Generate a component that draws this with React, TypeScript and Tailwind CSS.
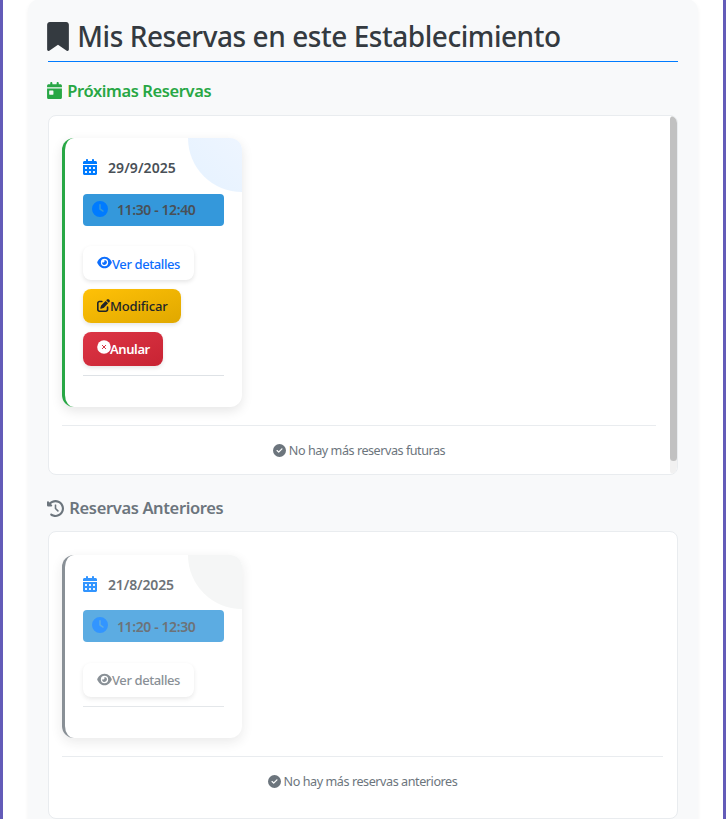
import type { ReactNode } from "react";
import {
  FaBookmark,
  FaCalendarDay,
  FaCalendarDays,
  FaCircleCheck,
  FaClock,
  FaClockRotateLeft,
  FaEye,
  FaPenToSquare,
} from "react-icons/fa6";

function CancelIcon() {
  return (
    <svg viewBox="0 0 14 14" className="size-[14px] shrink-0 -translate-y-[2px]" aria-hidden="true">
      <circle cx="7" cy="7" r="6.8" fill="#fff" />
      <path d="M5.3 5.3l3.4 3.4M8.7 5.3L5.3 8.7" stroke="#d73243" strokeWidth="1" strokeLinecap="round" />
    </svg>
  );
}

function Booking({
  date,
  time,
  past = false,
  children,
}: {
  date: string;
  time: string;
  past?: boolean;
  children: ReactNode;
}) {
  return (
    <article
      className={`relative w-[180px] overflow-hidden rounded-[12px] border-l-[3px] bg-white px-[18px] shadow-[0_4px_12px_rgba(0,0,0,0.1)] ${
        past ? "h-[183px] border-[#6c757d] opacity-80" : "h-[269px] border-[#28a745]"
      }`}
    >
      <div
        className={`absolute right-0 top-0 h-[54px] w-[54px] rounded-bl-full ${
          past ? "bg-[#f3f5f4]" : "bg-linear-to-tr from-[#e5f2ff] to-[#eef5ff]"
        }`}
      />
      <div className={`flex items-center pt-[3px] ${past ? "h-[55px]" : "h-[56px]"}`}>
        <FaCalendarDays
          className={`mr-[11px] h-4 w-[14px] shrink-0 text-[#007bff] ${past ? "" : "-translate-y-px"}`}
        />
        <span className={`text-[14px] font-semibold text-[#495057] ${past ? "tracking-[-0.15px]" : "tracking-[0.08px]"}`}>
          {date}
        </span>
      </div>
      <div className="flex h-8 items-center rounded-[4px] bg-[#3498db] pl-[9px]">
        <FaClock className="mr-[9px] size-4 shrink-0 -translate-y-px text-[#007bff]" />
        <span
          className={`text-[14px] font-semibold tracking-[-0.4px] text-[#495057] ${past ? "" : "-translate-y-px"}`}
        >
          {time}
        </span>
      </div>
      <div
        className={`flex flex-col items-start gap-[9px] border-b border-[#dee2e6] pb-[9px] ${past ? "mt-[21px]" : "mt-5"}`}
      >
        {children}
      </div>
    </article>
  );
}

const action =
  "flex h-[34px] items-center whitespace-nowrap rounded-[8px] px-[14px] text-[13px] shadow-[0_2px_4px_rgba(0,0,0,0.1)]";

function Details({ past = false }: { past?: boolean }) {
  return (
    <button className={`${action} w-[111px] bg-white font-medium ${past ? "text-[#6c757d]" : "text-[#0d6efd]"}`}>
      <FaEye className="h-[13px] w-[15px] shrink-0 -translate-y-px" />
      <span className={`tracking-[-0.4px] ${past ? "translate-y-px" : "translate-y-[2px]"}`}>Ver detalles</span>
    </button>
  );
}

export default function App() {
  return (
    <div className="h-[819px] w-[726px] overflow-hidden border-x-[3px] border-[#635bb8] bg-white px-[25px] font-['Noto_Sans','Open_Sans',sans-serif]">
      <main className="-mt-px h-[860px] rounded-t-[12px] bg-[#f8f9fa] px-5 shadow-[0_2px_4px_rgba(0,0,0,0.05)]">
        <h1 className="flex h-[63px] items-center whitespace-nowrap border-b border-[#007bff] pt-[12px] text-[28px] font-medium text-[#343a40]">
          <FaBookmark className="-ml-[0.7px] mr-[8px] h-[29px] w-[22px] shrink-0" />
          <span className="tracking-[-0.45px]">Mis Reservas en este Establecimiento</span>
        </h1>

        <h2 className="flex h-[53px] items-center pt-[5px] text-[16.5px] font-semibold text-[#28a745]">
          <FaCalendarDay className="-ml-[0.7px] mr-[5px] h-[17px] w-[15px] shrink-0 -translate-y-px" />
          <span className="tracking-[-0.4px]">Próximas Reservas</span>
        </h2>
        <section className="flex h-[360px] w-[630px] overflow-hidden rounded-[8px] border border-[#e9ecef] bg-white">
          <div className="flex-1 pl-[13px] pr-[14px] pt-[22px]">
            <Booking date="29/9/2025" time="11:30 - 12:40">
              <Details />
              <button className={`${action} w-[98px] bg-linear-to-br from-[#ffc107] to-[#e0a800] font-medium text-[#212529]`}>
                <FaPenToSquare className="size-[13px] shrink-0 -translate-y-px" />
                <span className="translate-y-px tracking-[-0.15px]">Modificar</span>
              </button>
              <button className={`${action} w-[80px] bg-linear-to-br from-[#dc3545] to-[#c82333] font-semibold text-white`}>
                <CancelIcon />
                <span className="-ml-px translate-y-px tracking-[-0.4px]">Anular</span>
              </button>
            </Booking>
            <div className="mt-[18px] flex h-[50px] items-center justify-center border-t border-[#e9ecef] text-[12.6px] text-[#6c757d]">
              <FaCircleCheck className="mr-[3px] size-[13px]" />
              <span className="translate-y-px tracking-[-0.46px]">No hay más reservas futuras</span>
            </div>
          </div>
          <div className="w-[7px] rounded-[4px] bg-[#f1f1f1]">
            <div className="h-[345px] rounded-[4px] bg-[#c1c1c1]" />
          </div>
        </section>

        <h2 className="flex h-[56px] items-center pt-[10px] text-[16.5px] font-semibold text-[#6c757d]">
          <FaClockRotateLeft className="-ml-[0.7px] mr-[5px] size-[17px] shrink-0" />
          <span className="tracking-[-0.36px]">Reservas Anteriores</span>
        </h2>
        <section className="h-[288px] w-[630px] rounded-[8px] border border-[#e9ecef] bg-white pl-[13px] pr-[14px] pt-[23px]">
          <Booking date="21/8/2025" time="11:20 - 12:30" past>
            <Details past />
          </Booking>
          <div className="mt-[18px] flex h-[50px] items-center justify-center border-t border-[#e9ecef] text-[12.6px] text-[#6c757d]">
            <FaCircleCheck className="mr-[3px] size-[13px]" />
            <span className="translate-y-px tracking-[-0.44px]">No hay más reservas anteriores</span>
          </div>
        </section>
      </main>
    </div>
  );
}
